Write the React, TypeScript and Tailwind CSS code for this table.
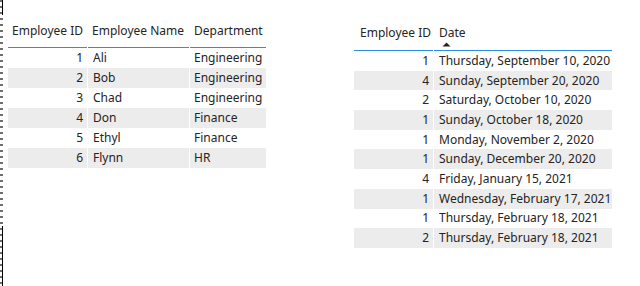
const employees = [
  { id: 1, name: "Ali", dept: "Engineering" },
  { id: 2, name: "Bob", dept: "Engineering" },
  { id: 3, name: "Chad", dept: "Engineering" },
  { id: 4, name: "Don", dept: "Finance" },
  { id: 5, name: "Ethyl", dept: "Finance" },
  { id: 6, name: "Flynn", dept: "HR" },
]

const visits = [
  { id: 1, date: "Thursday, September 10, 2020" },
  { id: 4, date: "Sunday, September 20, 2020" },
  { id: 2, date: "Saturday, October 10, 2020" },
  { id: 1, date: "Sunday, October 18, 2020" },
  { id: 1, date: "Monday, November 2, 2020" },
  { id: 1, date: "Sunday, December 20, 2020" },
  { id: 4, date: "Friday, January 15, 2021" },
  { id: 1, date: "Wednesday, February 17, 2021" },
  { id: 1, date: "Thursday, February 18, 2021" },
  { id: 2, date: "Thursday, February 18, 2021" },
]

function SortArrow() {
  return (
    <svg width="9" height="5" viewBox="0 0 9 5" className="block">
      <path d="M0.5 4.5 L4.5 0.5 L8.5 4.5 Z" fill="#252423" />
    </svg>
  )
}

export default function App() {
  return (
    <main className="flex h-[286px] w-[640px] bg-white font-['Segoe_UI','Noto_Sans',sans-serif] text-[12px] text-[#252423]">
      <div className="relative w-[3px] shrink-0 bg-[repeating-linear-gradient(to_bottom,#6e6e6e_0_2px,transparent_2px_6px)]">
        <div className="absolute left-[2px] top-0 h-[15px] w-px bg-black" />
        <div className="absolute bottom-0 left-[2px] h-[60px] w-px bg-black" />
      </div>

      <section className="ml-[5px] mt-[15px]">
        <div className="grid grid-cols-[79px_101px_76px] gap-x-px">
          <div className="flex h-[33px] items-end border-b border-[#2a8fe5] pb-[7px] pl-[4px]">Employee ID</div>
          <div className="flex h-[33px] items-end border-b border-[#2a8fe5] pb-[7px] pl-[4px]">Employee Name</div>
          <div className="flex h-[33px] items-end border-b border-[#2a8fe5] pb-[7px] pl-[4px]">Department</div>
          {employees.map((e, i) => {
            const bg = i % 2 === 1 ? "bg-[#ececec]" : "bg-white"
            return [
              <div key={`a${i}`} className={`${bg} flex h-[20px] items-center justify-end pr-[4px]`}>{e.id}</div>,
              <div key={`b${i}`} className={`${bg} flex h-[20px] items-center pl-[5px]`}>{e.name}</div>,
              <div key={`c${i}`} className={`${bg} flex h-[20px] items-center pl-[4px]`}>{e.dept}</div>,
            ]
          })}
        </div>
      </section>

      <section className="ml-[88px] mt-[19px]">
        <div className="grid grid-cols-[79px_178px] gap-x-px">
          <div className="flex h-[32px] items-start border-b border-[#2a8fe5] pl-[6px] pt-[6px] leading-[16px]">Employee ID</div>
          <div className="flex h-[32px] flex-col items-start border-b border-[#2a8fe5] pl-[5px] pt-[6px] leading-[16px]">
            <span>Date</span>
            <span className="ml-[3px] mt-px"><SortArrow /></span>
          </div>
          {visits.map((v, i) => {
            const bg = i % 2 === 1 ? "bg-[#ececec]" : "bg-white"
            return [
              <div key={`a${i}`} className={`${bg} flex h-[19.7px] items-center justify-end pr-[4px]`}>{v.id}</div>,
              <div key={`b${i}`} className={`${bg} flex h-[19.7px] items-center pl-[5px]`}>{v.date}</div>,
            ]
          })}
        </div>
      </section>
    </main>
  )
}
